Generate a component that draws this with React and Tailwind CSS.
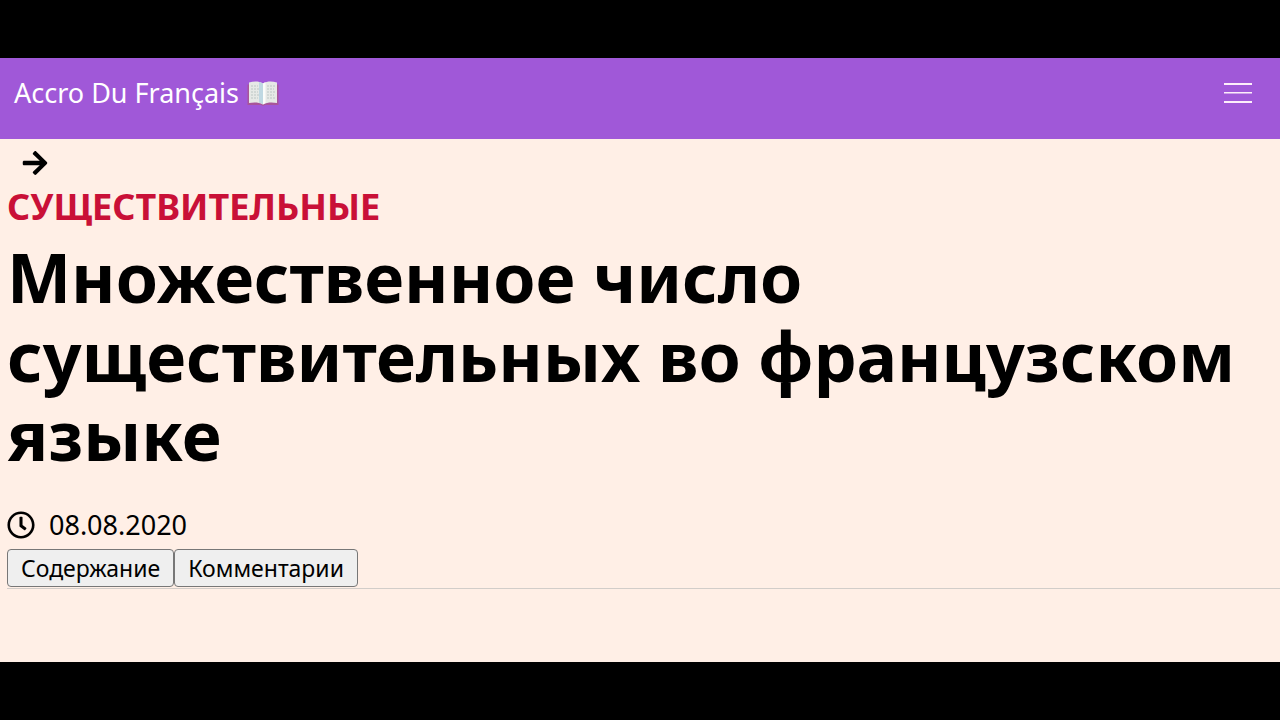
import { FaArrowRight, FaRegClock } from 'react-icons/fa'

function BookIcon() {
  return (
    <svg className="h-7 w-8" viewBox="0 0 32 28" aria-hidden="true">
      <path d="M0.500 5.500h31V26H18l-2 1-2-1H0.500z" fill="#a8559a" />
      <path d="M2 3.500C7 2 12 2 16 4.500 20 2 25 2 30 3.500V24c-5-.8-10-.8-14 1.500C12 23.200 7 23.200 2 24z" fill="#e6e9e6" />
      <path d="M16 4.500C14.500 3.400 13 3 12 2.900V23.800c1.600.2 2.800.7 4 1.700z" fill="#bfd8e2" />
      <path d="M16 4.500c.8-.6 1.600-1 2.500-1.200V24.200c-.9.3-1.700.7-2.500 1.300z" fill="#fbfcf9" />
      <path
        d="M4 7h7M4 10h8M4 13h7M4 16h8M4 19h7M20 7h8M20 10h7M20 13h8M20 16h7M20 19h8"
        stroke="#bcc6c4"
        strokeWidth="1"
        strokeDasharray="2 1"
      />
    </svg>
  )
}

function Header() {
  return (
    <header className="flex items-start justify-between bg-[#a058d8] pt-[17px] pr-7 pb-7 pl-3.5 text-white">
      <a href="#" className="flex items-center gap-2 text-[27px] leading-9">
        <span>Accro Du Français</span>
        <BookIcon />
      </a>
      <button type="button" aria-label="Меню" className="mt-2">
        <svg className="h-6 w-7" viewBox="0 0 28 24" fill="#fdeefa">
          <path d="M0 0h28v2H0zM0 9h28v1.500H0zM0 18h28v2H0z" />
        </svg>
      </button>
    </header>
  )
}

function Article() {
  return (
    <main className="grow bg-[#ffefe6] pl-[7px] text-black">
      <div className="flex h-12 items-center px-3.5">
        <a href="#" aria-label="Далее">
          <FaArrowRight className="size-7" />
        </a>
      </div>
      <p className="text-4xl leading-10 font-bold text-[#c91037] uppercase">Существительные</p>
      <h1 className="mt-2.5 text-[68px] leading-[79px] font-bold">
        Множественное число существительных во французском языке
      </h1>
      <div className="mt-[31px] flex items-center gap-3.5 text-[27px] leading-10">
        <FaRegClock className="size-7" />
        <time dateTime="2020-08-08">08.08.2020</time>
      </div>
      <div className="mt-1 flex border-b border-[#d2cdc9] pb-px text-[23px] leading-8">
        <button type="button" className="h-[38px] rounded border border-[#777] bg-[#efefef] px-[13px]">
          Содержание
        </button>
        <button type="button" className="h-[38px] rounded border border-[#777] bg-[#efefef] px-[13px]">
          Комментарии
        </button>
      </div>
    </main>
  )
}

export default function App() {
  return (
    <div className="flex min-h-screen flex-col bg-black py-[58px] font-['Noto_Sans',sans-serif]">
      <Header />
      <Article />
    </div>
  )
}
